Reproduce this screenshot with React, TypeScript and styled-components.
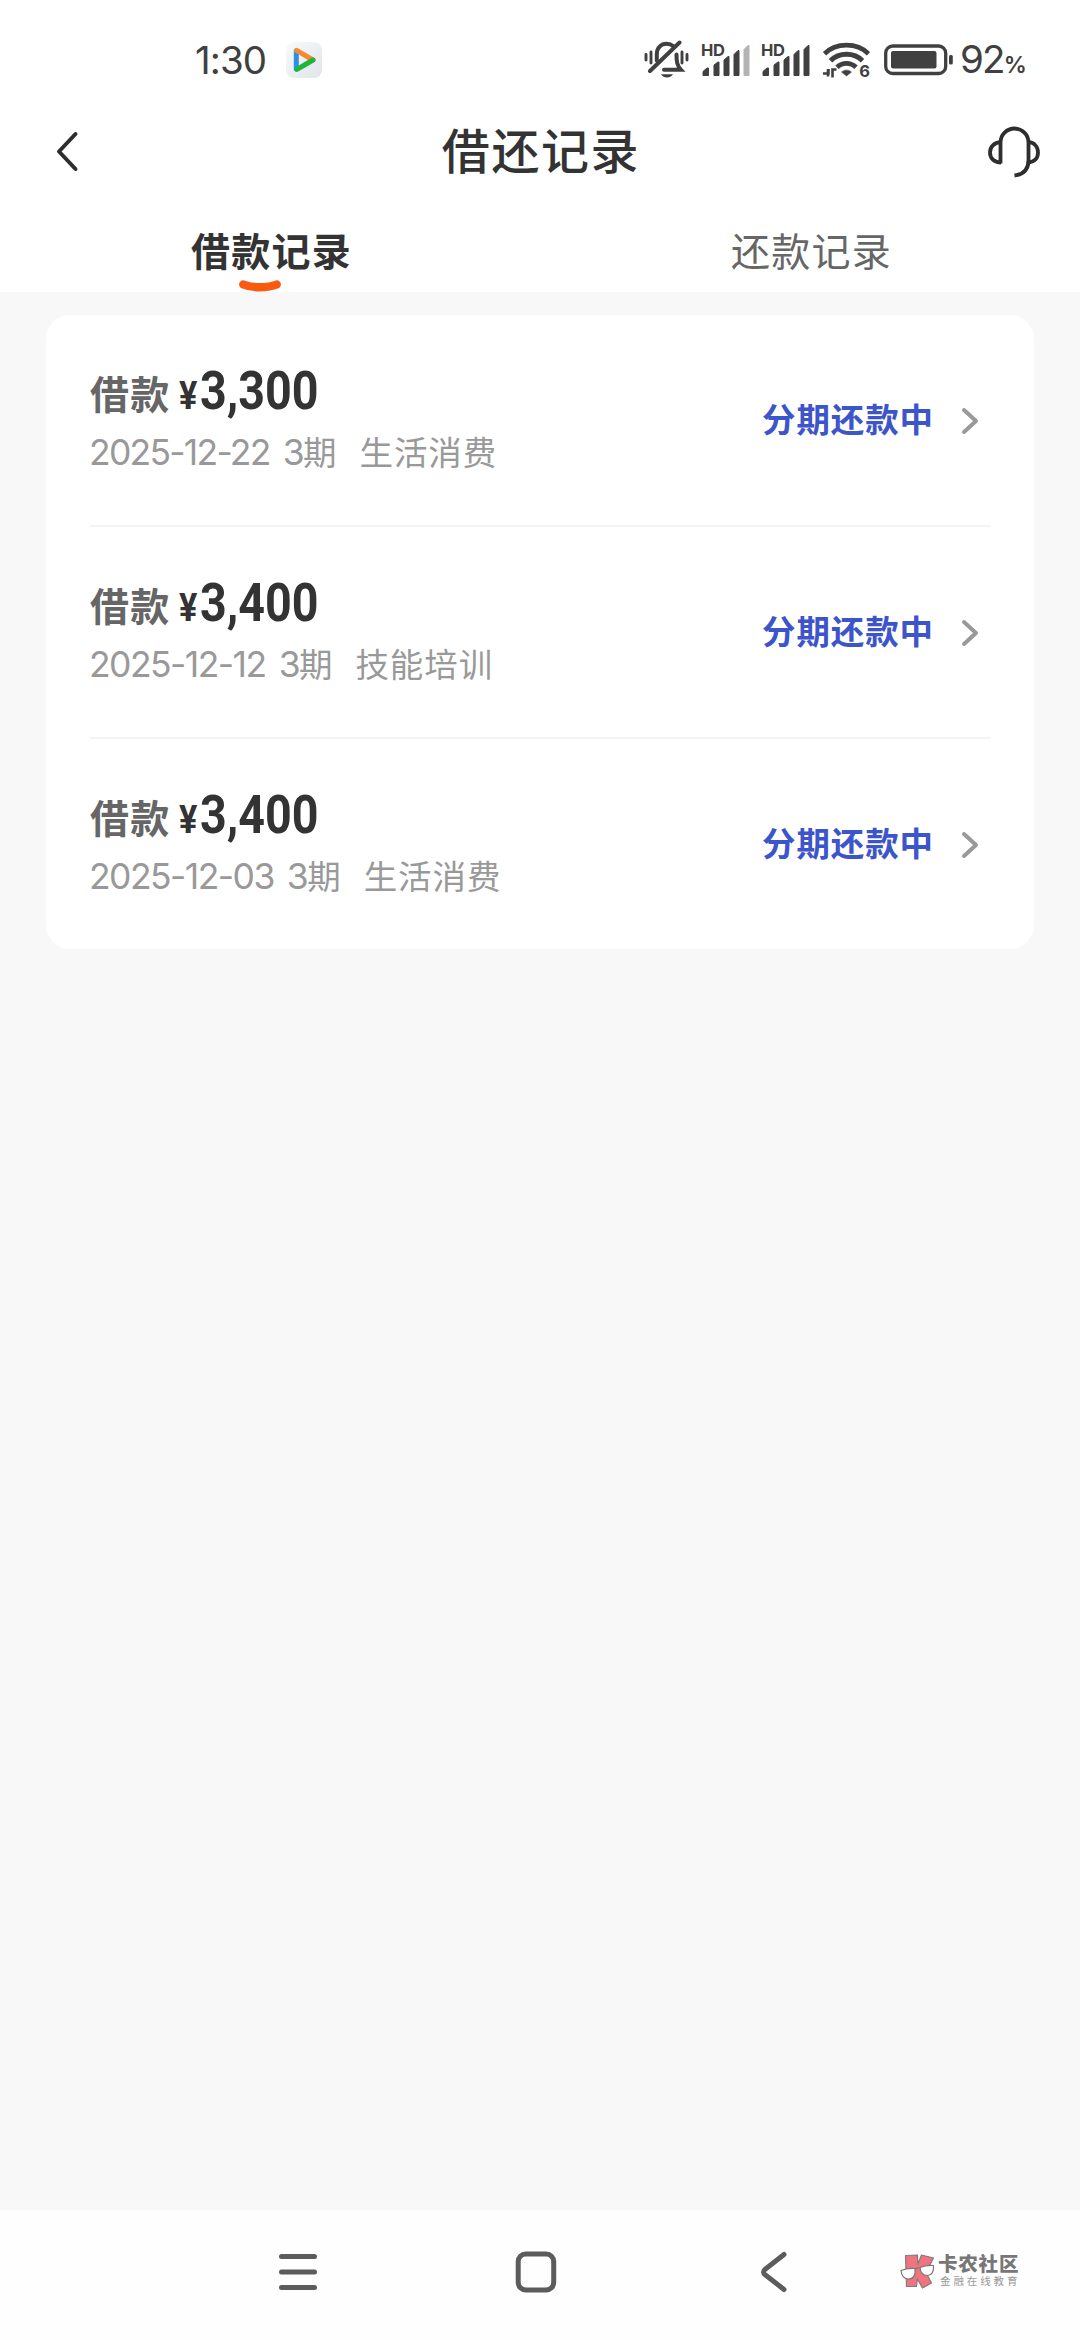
import React from "react";
import styled, { createGlobalStyle } from "styled-components";

const CJK = `"Noto Sans CJK SC", sans-serif`;

const Global = createGlobalStyle`
  *, *::before, *::after { box-sizing: border-box; }
  html, body { margin: 0; padding: 0; background: #f8f8f8; }
  body { font-family: Inter, ${CJK}; }
  svg { display: block; flex: none; }
`;

const Screen = styled.div`
  width: 1080px;
  height: 2340px;
  display: flex;
  flex-direction: column;
  overflow: hidden;
  background: #f8f8f8;
`;

const Top = styled.header`
  height: 292px;
  flex: none;
  background: #fff;
  display: flex;
  flex-direction: column;
`;

const StatusBar = styled.div`
  height: 104px;
  flex: none;
  padding: 16px 55px 0 195px;
  display: flex;
  align-items: center;
  color: #404040;
`;

const Clock = styled.span`
  width: 91px;
  font: 400 38.5px/44px Inter, sans-serif;
  letter-spacing: -0.9px;
`;

const StatusIcons = styled.div`
  margin-left: auto;
  display: flex;
  align-items: center;
`;

const Gap = styled.span<{ $w: number }>`
  width: ${(p) => p.$w}px;
  flex: none;
`;

const Percent = styled.span`
  width: 65px;
  margin-top: 3px;
  display: flex;
  align-items: baseline;
  white-space: nowrap;
  font: 400 38.5px/44px Inter, sans-serif;
  letter-spacing: -1.8px;
  small {
    font-size: 23px;
    font-weight: 600;
    letter-spacing: 0;
    margin-left: 0;
  }
`;

const TitleBar = styled.div`
  height: 96px;
  flex: none;
  display: grid;
  grid-template-columns: 92px 1fr 92px;
  align-items: center;
`;

const Title = styled.h1`
  margin: 0;
  padding: 0 0 8px 2px;
  text-align: center;
  font: 500 48px/60px ${CJK};
  letter-spacing: 1.6px;
  color: #333;
`;

const IconButton = styled.button<{ $end?: boolean }>`
  border: 0;
  padding: 0;
  height: 60px;
  background: none;
  display: flex;
  align-items: center;
  justify-content: ${(p) => (p.$end ? "flex-start" : "flex-end")};
`;

const Tabs = styled.nav`
  flex: 1;
  display: grid;
  grid-template-columns: 1fr 1fr;
`;

const Tab = styled.div<{ $active?: boolean }>`
  display: flex;
  flex-direction: column;
  align-items: center;
  padding: 20px 0 0 3px;
  font: ${(p) => (p.$active ? 700 : 400)} 39px/58px ${CJK};
  letter-spacing: 1.2px;
  color: ${(p) => (p.$active ? "#333" : "#666")};
  svg { margin: 2px 23px 0 0; }
`;

const Content = styled.main`
  flex: 1;
  padding: 23px 46px 0;
`;

const Card = styled.section`
  height: 634px;
  border-radius: 24px;
  background: #fff;
  padding: 0 43px 0 44px;
`;

const Row = styled.article`
  height: 212px;
  display: flex;
  align-items: center;
  justify-content: space-between;
  &:first-child { height: 210px; }
  & + & { border-top: 2px solid #f4f4f4; }
`;

const Info = styled.div`
  display: flex;
  flex-direction: column;
  padding-bottom: 3px;
`;

const AmountLine = styled.div`
  height: 58px;
  display: flex;
  align-items: baseline;
`;

const Label = styled.span`
  font: 700 39px/58px ${CJK};
  letter-spacing: 1.2px;
  color: #666;
`;

const Amount = styled.span`
  margin-left: 9px;
  display: inline-block;
  transform: scaleX(0.88);
  transform-origin: left;
  font: 700 53px/58px Roboto, sans-serif;
  color: #333;
  small { font-size: 39px; margin-right: 3px; }
`;

const Meta = styled.div`
  height: 48px;
  margin: 7px 0 0 -1px;
  display: flex;
  align-items: baseline;
  white-space: nowrap;
  color: #999;
  font: 400 33.5px/48px ${CJK};
  letter-spacing: 0.9px;
`;

const Digits = styled.span<{ $track: number }>`
  font: 400 35.5px/48px Inter, sans-serif;
  letter-spacing: ${(p) => p.$track}px;
`;

const Count = styled(Digits)`
  margin-left: 13px;
`;

const Purpose = styled.span`
  margin-left: 22px;
`;

const State = styled.div`
  display: flex;
  align-items: center;
  gap: 27px;
  padding: 1px 12px 0 0;
  font: 700 33.5px/50px ${CJK};
  letter-spacing: 0.9px;
  color: #3d55cb;
  span { margin-top: -5px; }
`;

const NavBar = styled.footer`
  height: 130px;
  flex: none;
  background: #fefefe;
  padding-left: 179px;
  display: flex;
  align-items: center;
`;

const NavSlot = styled.div`
  width: 238px;
  height: 124px;
  padding-bottom: 6px;
  flex: none;
  display: flex;
  align-items: center;
  justify-content: center;
`;

const Mark = styled.div`
  margin-left: 7px;
  padding-bottom: 11px;
  display: flex;
  align-items: center;
  gap: 2px;
`;

const MarkText = styled.div`
  display: flex;
  flex-direction: column;
  white-space: nowrap;
  strong {
    font: 900 19.5px/22px ${CJK};
    letter-spacing: 0.8px;
    color: #777;
  }
  span {
    margin-left: 2px;
    font: 400 10.5px/14px ${CJK};
    letter-spacing: 2.9px;
    color: #999;
  }
`;

const PlayIcon = () => (
  <svg width="36" height="36" viewBox="0 0 36 36">
    <defs>
      <linearGradient id="tile" x1="0" y1="0" x2="1" y2="1">
        <stop offset="0" stopColor="#f8fafc" />
        <stop offset="1" stopColor="#e0e5eb" />
      </linearGradient>
    </defs>
    <rect width="36" height="36" rx="8" fill="url(#tile)" />
    <g fill="none" strokeWidth="5" strokeLinecap="round" strokeLinejoin="round">
      <path d="M10.3 27V9" stroke="#2b8fe6" />
      <path d="M10.6 8.4L27 18" stroke="#f58a36" />
      <path d="M27 18L11 27.4" stroke="#22b53c" />
    </g>
  </svg>
);

const MuteIcon = () => (
  <svg width="46" height="40" viewBox="0 0 46 40" fill="none" stroke="#404040" strokeWidth="4" strokeLinecap="round">
    <path d="M2 14.500v5.500M7 12v11M38 12v11M43 14.500v5.500" strokeWidth="2.900" />
    <path d="M12.800 20.500V14C12.800 8 17 3.800 22.500 3.800c2.800 0 5 .8 7 2.500" />
    <path d="M32.500 14.500c0 7.500.5 11 4.500 15.300H20" />
    <path d="M35.500 2.500L6 31" />
    <path d="M17 34.200h12c-1.500 2.300-3.500 3.300-6 3.300s-4.500-1-6-3.300z" fill="#404040" stroke="none" />
  </svg>
);

const HD = styled.span`
  margin-top: -1px;
  font: 700 16.5px/16px Inter, sans-serif;
  letter-spacing: -0.4px;
`;

const SignalBox = styled.div`
  width: 50px;
  height: 34px;
  display: grid;
  > * { grid-area: 1 / 1; }
`;

const Signal = ({ weak }: { weak?: boolean }) => (
  <SignalBox>
    <HD>HD</HD>
    <svg width="50" height="34" viewBox="0 0 50 34" fill="#404040">
      <path d="M2 32.500v-4l4-3.500h1.500v7.500zM13 32.500V22l4-3h1v13.500zM23 32.500V17l4-3.500h1v19zM33 32.500V11.500l4-4h1v25z" stroke="#404040" strokeLinejoin="round" />
      <path d="M43 32.500V6.500l4-4h1v30z" fill={weak ? "#b3b3b3" : "#404040"} stroke={weak ? "#b3b3b3" : "#404040"} strokeLinejoin="round" />
    </svg>
  </SignalBox>
);

const WifiSix = styled.div`
  width: 47px;
  height: 36px;
  display: grid;
  > * { grid-area: 1 / 1; }
  span {
    place-self: end;
    font: 700 16.5px/14px Inter, sans-serif;
  }
`;

const Wifi = () => (
  <WifiSix>
    <svg width="47" height="36" viewBox="0 0 47 36" fill="none" stroke="#404040">
      <path d="M1.500 11.800C13 .300 34 .300 45.500 11.800" strokeWidth="4.800" />
      <path d="M7.500 18.700c8.500-8.600 23.500-8.600 32 0" strokeWidth="4.800" />
      <path d="M14 25.300c5.500-5.300 13.500-5.300 19 0" strokeWidth="4.800" />
      <path d="M18.500 30c3-2.500 7-2.500 10 0l-5 4z" fill="#404040" strokeWidth="0.500" />
      <path d="M0 31.500h5.500V27M5 27v7.500M9.500 35.500v-8h4" strokeWidth="2.600" />
    </svg>
    <span>6</span>
  </WifiSix>
);

const Battery = () => (
  <svg width="70" height="32" viewBox="0 0 70 32">
    <rect x="1.700" y="2" width="60" height="27.500" rx="7" fill="none" stroke="#404040" strokeWidth="3.300" />
    <rect x="7" y="7" width="45.500" height="17.500" rx="2" fill="#404040" />
    <rect x="65" y="11" width="3.800" height="9.500" rx="1.500" fill="#404040" />
  </svg>
);

const Headset = () => (
  <svg width="52" height="52" viewBox="0 0 52 52" fill="none" stroke="#2e2e2e" strokeWidth="3.800">
    <path d="M12.500 37.500V16.500a14 14 0 0 1 28 0V34c0 9-5 14.500-14 15.500" />
    <path d="M13 36.500C6 36.500 2 32 2 26.500S6 16.500 13 16" />
    <path d="M40.500 16c5.500.5 9.500 4.500 9.500 10.500s-4 9.500-9.500 10" />
  </svg>
);

const MarkLogo = () => (
  <svg width="36" height="38" viewBox="0 0 36 38" strokeLinejoin="round">
    <path d="M5.500 4.500L17.500 4l.3 9.500L21.500 4l12 3-7.500 14.500L31.500 32 22.500 37l-5.200-9-.8 7.500H6.500z" fill="#f0747f" stroke="#857a7a" strokeWidth="1.200" />
    <path d="M1 19.500c5-2 9-2.500 14-2 1 7-2 10.500-6.500 10.500S1.500 25 1 19.500zM20 16.500c5-2 9-2.500 13.500-2 .5 6.500-2 10-6 10S20.500 22 20 16.500z" fill="#fff" stroke="#777" strokeWidth="1.200" />
    <path d="M15 18.500c1.500-1.500 3.500-2 5-1.500" fill="none" stroke="#777" strokeWidth="1.200" />
  </svg>
);

type Loan = { amount: string; date: string; purpose: string; track: number };

const loans: Loan[] = [
  { amount: "3,300", date: "2025-12-22", purpose: "生活消费", track: -1.75 },
  { amount: "3,400", date: "2025-12-12", purpose: "技能培训", track: -1.55 },
  { amount: "3,400", date: "2025-12-03", purpose: "生活消费", track: -1.55 },
];

const LoanRow = ({ amount, date, purpose, track }: Loan) => (
  <Row>
    <Info>
      <AmountLine>
        <Label>借款</Label>
        <Amount><small>¥</small>{amount}</Amount>
      </AmountLine>
      <Meta>
        <Digits $track={track}>{date}</Digits>
        <Count $track={-1.5}>3</Count>
        <span>期</span>
        <Purpose>{purpose}</Purpose>
      </Meta>
    </Info>
    <State>
      <span>分期还款中</span>
      <svg width="18" height="28" viewBox="0 0 18 28" fill="none" stroke="#999" strokeWidth="4" strokeLinecap="round" strokeLinejoin="round">
        <path d="M3 3l12 11L3 25" />
      </svg>
    </State>
  </Row>
);

export default function App() {
  return (
    <>
      <Global />
      <Screen>
        <Top>
          <StatusBar>
            <Clock>1:30</Clock>
            <PlayIcon />
            <StatusIcons>
              <MuteIcon />
              <Gap $w={11} />
              <Signal weak />
              <Gap $w={10} />
              <Signal />
              <Gap $w={12} />
              <Wifi />
              <Gap $w={14} />
              <Battery />
              <Gap $w={6} />
              <Percent>92<small>%</small></Percent>
            </StatusIcons>
          </StatusBar>
          <TitleBar>
            <IconButton aria-label="返回">
              <svg width="36" height="42" viewBox="0 0 36 42" fill="none" stroke="#2e2e2e" strokeWidth="4" strokeLinecap="round" strokeLinejoin="round">
                <path d="M19.500 3L3 20.500 19.500 38" />
              </svg>
            </IconButton>
            <Title>借还记录</Title>
            <IconButton $end aria-label="客服">
              <Headset />
            </IconButton>
          </TitleBar>
          <Tabs>
            <Tab $active>
              借款记录
              <svg width="44" height="12" viewBox="0 0 44 12" fill="none">
                <path d="M5.300 4.500C14 8.200 30 8.200 38.700 4.500" stroke="#fa5a0f" strokeWidth="8.400" strokeLinecap="round" />
              </svg>
            </Tab>
            <Tab>还款记录</Tab>
          </Tabs>
        </Top>
        <Content>
          <Card>
            {loans.map((loan) => (
              <LoanRow key={loan.date} {...loan} />
            ))}
          </Card>
        </Content>
        <NavBar>
          <NavSlot>
            <svg width="40" height="42" viewBox="0 0 40 42" stroke="#5c5c5c" strokeWidth="5" strokeLinecap="round">
              <path d="M3.500 5.500h33M3.500 21h33M3.500 36.500h33" />
            </svg>
          </NavSlot>
          <NavSlot>
            <svg width="42" height="42" viewBox="0 0 42 42" fill="none" stroke="#5c5c5c" strokeWidth="5">
              <rect x="3.200" y="3" width="35.500" height="36" rx="7.500" />
            </svg>
          </NavSlot>
          <NavSlot>
            <svg width="28" height="42" viewBox="0 0 28 42" fill="none" stroke="#5c5c5c" strokeWidth="5" strokeLinecap="round">
              <path d="M24 3.500L5.500 18q-4 3 0 6L24 38.500" />
            </svg>
          </NavSlot>
          <Mark>
            <MarkLogo />
            <MarkText>
              <strong>卡农社区</strong>
              <span>金融在线教育</span>
            </MarkText>
          </Mark>
        </NavBar>
      </Screen>
    </>
  );
}
